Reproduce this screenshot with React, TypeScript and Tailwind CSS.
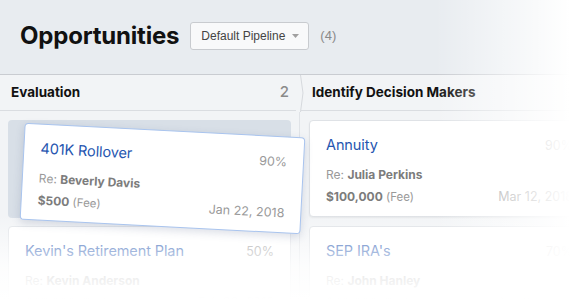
import React from "react";

type CardProps = {
  title: string;
  pct: string;
  person: string;
  amount: string;
  date: string;
  className?: string;
};

function Card({ title, pct, person, amount, date, className = "" }: CardProps) {
  return (
    <div
      className={`w-[281px] h-[97px] shrink-0 bg-white rounded-[4px] px-[16px] pt-[13px] flex flex-col ${className}`}
    >
      <div className="flex items-start justify-between h-[22px]">
        <span className="text-[14.5px] leading-[22px] text-[#2556b0] tracking-[-0.1px]">{title}</span>
        <span className="text-[12.5px] leading-[22px] text-[#9a9a9a] mt-[1px]">{pct}</span>
      </div>
      <div className="mt-[11px] text-[12px] leading-[16px] text-[#9a9a9a]">
        Re: <span className="font-bold text-[#7c7c7c]">{person}</span>
      </div>
      <div className="mt-[6px] flex items-baseline justify-between">
        <span className="text-[11.5px] leading-[16px] text-[#9a9a9a]">
          <span className="font-bold text-[12px] text-[#7c7c7c]">{amount}</span> (Fee)
        </span>
        <span className="text-[12.5px] leading-[16px] text-[#9a9a9a]">{date}</span>
      </div>
    </div>
  );
}

export default function App() {
  return (
    <div
      className="relative w-[570px] h-[299px] overflow-hidden bg-[#f2f4f6]"
      style={{ fontFamily: "Inter, 'Liberation Sans', Arial, sans-serif" }}
    >
      {/* Header */}
      <div className="h-[75px] bg-[#e8ecf0] border-b border-[#c9ccd1] flex items-center pl-[20px] pb-[2px]">
        <h1 className="text-[24px] font-bold text-[#111] tracking-[-0.2px] leading-none">Opportunities</h1>
        <button
          className="ml-[11px] w-[119px] h-[28px] bg-[#f8f9fa] border border-[#c8cbcf] rounded-[3px] flex items-center pl-[10px] text-[12px] text-[#444]"
          style={{ fontFamily: "'Liberation Sans', Arial, sans-serif" }}
        >
          Default Pipeline
          <svg width="7" height="4" viewBox="0 0 7 4" className="ml-[7px]">
            <path d="M0 0 L7 0 L3.5 4 Z" fill="#a0a0a0" />
          </svg>
        </button>
        <span
          className="ml-[11px] text-[13px] text-[#8a8a8a]"
          style={{ fontFamily: "'Liberation Sans', Arial, sans-serif" }}
        >
          (4)
        </span>
      </div>

      {/* Columns */}
      <div className="flex">
        {/* Column 1 */}
        <div className="w-[300px] shrink-0 border-r border-[#e0e3e7] h-[224px]">
          <div className="relative h-[36px] border-b border-[#dadde1] flex items-center justify-between pl-[11px] pr-[10px]">
            <span className="text-[13.5px] font-bold text-[#111]">Evaluation</span>
            <span className="text-[15px] font-medium text-[#8a8a8a]">2</span>
            <svg
              width="8"
              height="37"
              viewBox="0 0 8 37"
              className="absolute right-[-5px] top-0"
            >
              <rect x="0" y="0" width="5" height="37" fill="#f2f4f6" />
              <path d="M4.5 0 L7 18 L4.5 37" stroke="#d6d9dd" strokeWidth="1" fill="none" />
            </svg>
          </div>
          <div className="px-[8px] pt-[9px]">
            <div className="relative h-[98px] rounded-[4px] bg-[#d8dfe7]">
              <div className="absolute left-[14px] top-[10px] z-20 rotate-[3deg]">
                <Card
                  title="401K Rollover"
                  pct="90%"
                  person="Beverly Davis"
                  amount="$500"
                  date="Jan 22, 2018"
                  className="border border-[#a9c4ee] shadow-[0_3px_8px_rgba(60,80,120,0.18)]"
                />
              </div>
            </div>
            <div className="mt-[8px]">
              <Card
                title="Kevin's Retirement Plan"
                pct="50%"
                person="Kevin Anderson"
                amount="$25,000"
                date="Feb 02, 2018"
                className="w-[283px] border border-[#e1e4e8]"
              />
            </div>
          </div>
        </div>

        {/* Column 2 */}
        <div className="flex-1 overflow-hidden">
          <div className="h-[36px] border-b border-[#dadde1] flex items-center pl-[12px]">
            <span className="text-[13.5px] font-bold text-[#111] whitespace-nowrap">Identify Decision Makers</span>
          </div>
          <div className="pl-[9px] pt-[9px] flex flex-col gap-[9px]">
            <Card
              title="Annuity"
              pct="90%"
              person="Julia Perkins"
              amount="$100,000"
              date="Mar 12, 2018"
              className="border border-[#dfe2e6] shadow-[0_1px_2px_rgba(0,0,0,0.06)]"
            />
            <Card
              title="SEP IRA's"
              pct="70%"
              person="John Hanley"
              amount="$40,000"
              date="Apr 04, 2018"
              className="border border-[#dfe2e6]"
            />
          </div>
        </div>
      </div>

      {/* Fades */}
      <div className="pointer-events-none absolute top-0 right-0 w-[135px] h-full z-10 bg-gradient-to-r from-white/0 to-white" />
      <div className="pointer-events-none absolute left-0 bottom-0 w-full h-[84px] z-10 bg-gradient-to-b from-white/0 via-white/80 via-60% to-white" />
    </div>
  );
}
